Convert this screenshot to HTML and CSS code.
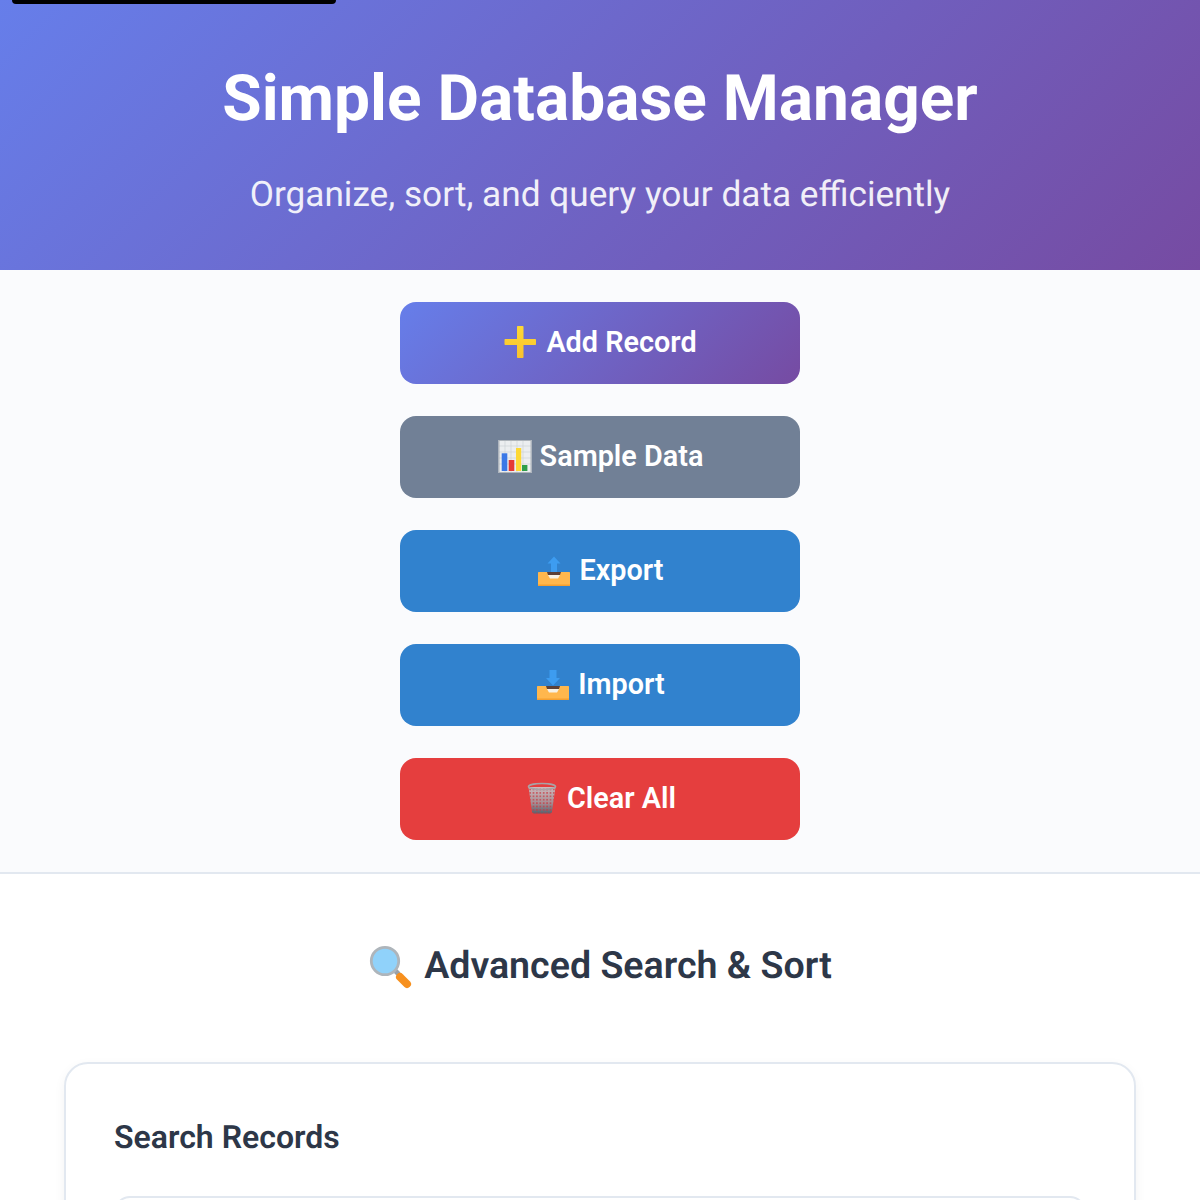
FILE: index.html
```html
<!DOCTYPE html>
<html lang="en">
<head>
  <meta charset="UTF-8" />
  <title>Simple Database Manager</title>
  <link rel="stylesheet" href="styles.css">
</head>
<body>
  <div class="notch"></div>
  <header class="header">
    <h1>Simple Database Manager</h1>
    <p>Organize, sort, and query your data efficiently</p>
  </header>

  <div class="controls">
    <button class="btn btn-primary">
      <svg class="icon" viewBox="0 0 34 34">
        <defs>
          <linearGradient id="plusFill" x1="0" y1="0" x2="0" y2="1">
            <stop offset="0" stop-color="#fdd835"/>
            <stop offset="1" stop-color="#f9c22e"/>
          </linearGradient>
        </defs>
        <path fill="url(#plusFill)" d="M14 1h4.500c.6 0 1 .4 1 1v12h11.500c.6 0 1 .4 1 1v4c0 .6-.4 1-1 1H19.500V32c0 .6-.4 1-1 1H14c-.6 0-1-.4-1-1V20H1.500c-.6 0-1-.4-1-1v-4c0-.6.4-1 1-1H13V2c0-.6.4-1 1-1z"/>
      </svg>
      <span>Add Record</span>
    </button>
    <button class="btn btn-secondary">
      <svg class="icon" viewBox="0 0 34 34">
        <rect x=".5" y="1" width="33" height="33" fill="#eceef0"/>
        <path fill="none" stroke="#cfd3d7" stroke-width=".7" d="M1 7h32M1 13h32M1 19h32M1 25h32M7 1v32M13 1v32M19 1v32M25 1v32"/>
        <rect x="1" y="1.500" width="32" height="32" fill="none" stroke="#aeb4ba" stroke-width="1"/>
        <rect x="3.700" y="14.300" width="5.600" height="17.700" fill="#3b78e7"/>
        <rect x="10.700" y="21" width="5.600" height="11" fill="#e53935"/>
        <rect x="18" y="9" width="5.200" height="23" fill="#fdd835"/>
        <rect x="24" y="26" width="5.400" height="6" fill="#2e9e4a"/>
      </svg>
      <span>Sample Data</span>
    </button>
    <button class="btn btn-info">
      <svg class="icon" viewBox="0 0 34 34">
        <defs>
          <g id="trayShape">
            <path fill="#ffb74d" d="M1 20c0-.6.4-1 1-1h30c.6 0 1 .4 1 1v12c0 .6-.4 1-1 1H2c-.6 0-1-.4-1-1z"/>
            <path fill="#f59f2f" d="M1 31.500h32v.5c0 .6-.4 1-1 1H2c-.6 0-1-.4-1-1z"/>
            <path fill="#5d4037" d="M10 19h14l-1 3H11z"/>
            <path fill="#f7f2e6" d="M11 22h12l-2 3.500h-8z"/>
          </g>
        </defs>
        <use href="#trayShape"/>
        <path fill="#3d9cf0" d="M17 3.500l6.500 7H20V19h-6v-8.500h-3.500z"/>
      </svg>
      <span>Export</span>
    </button>
    <button class="btn btn-info">
      <svg class="icon" viewBox="0 0 34 34">
        <use href="#trayShape"/>
        <path fill="#3d9cf0" d="M17 18.500l-7-7.500h3.500V3h7v8H24z"/>
      </svg>
      <span>Import</span>
    </button>
    <button class="btn btn-danger">
      <svg class="icon" viewBox="0 0 34 34">
        <defs>
          <linearGradient id="binFill" x1="0" y1="0" x2="0" y2="1">
            <stop offset="0" stop-color="#cdbcbf"/>
            <stop offset=".6" stop-color="#a88d93"/>
            <stop offset="1" stop-color="#56626e"/>
          </linearGradient>
          <pattern id="binMesh" width="3.400" height="3.400" patternUnits="userSpaceOnUse">
            <circle cx="1.700" cy="1.700" r=".95" fill="#c9343f" fill-opacity=".8"/>
          </pattern>
        </defs>
        <path fill="url(#binFill)" d="M3.500 6h27L27 30.500c-.1 1-1 2-2 2H9c-1 0-1.900-1-2-2z"/>
        <path fill="url(#binMesh)" d="M3.500 6h27L27 30.500c-.1 1-1 2-2 2H9c-1 0-1.900-1-2-2z"/>
        <ellipse cx="17" cy="5.500" rx="13.500" ry="3" fill="none" stroke="#a9a3a6" stroke-width="1.600"/>
      </svg>
      <span>Clear All</span>
    </button>
  </div>

  <section class="search-section">
    <h2>
      <svg class="icon-lg" viewBox="0 0 46 46">
        <path fill="#9aa1a8" d="M25 29l3.500-3.500 4 4-3.500 3.500z"/>
        <path fill="none" stroke="#f7901e" stroke-width="8" stroke-linecap="round" d="M32 34l7 7"/>
        <circle cx="17" cy="18" r="13.700" fill="#90d2fa" stroke="#aeb5bb" stroke-width="2.800"/>
      </svg>
      <span>Advanced Search &amp; Sort</span>
    </h2>
    <div class="card">
      <h3>Search Records</h3>
      <input class="search-input" type="text">
    </div>
  </section>
</body>
</html>
```
FILE: styles.css
```css
* {
  box-sizing: border-box;
}

html, body {
  height: 1200px;
  overflow: hidden;
}

body {
  margin: 0;
  background: #fff;
  font-family: Roboto, 'Noto Sans', sans-serif;
  color: #2d3748;
  text-rendering: geometricPrecision;
}

.notch {
  position: absolute;
  top: 0;
  left: 12px;
  width: 324px;
  height: 4px;
  background: #000;
  border-radius: 0 0 6px 6px;
}

.header {
  height: 270px;
  padding-top: 63px;
  background: linear-gradient(135deg, #667eea 0%, #764ba2 100%);
  color: white;
  text-align: center;
}

.header h1 {
  margin: 0 0 37px;
  font-size: 64px;
  line-height: 72px;
  font-weight: 700;
}

.header p {
  margin: 0;
  font-size: 35.2px;
  line-height: 44px;
  font-weight: 400;
  opacity: 0.9;
}

.controls {
  display: flex;
  flex-direction: column;
  align-items: center;
  gap: 32px;
  height: 604px;
  padding: 32px 0;
  background: #fafbfd;
  border-bottom: 2px solid #e2e8f0;
}

.btn {
  display: flex;
  align-items: center;
  justify-content: center;
  gap: 8px;
  width: 400px;
  height: 82px;
  padding: 0 0 2px 1px;
  border: none;
  border-radius: 16px;
  color: white;
  font-family: inherit;
  font-size: 28.8px;
  font-weight: 600;
  cursor: pointer;
}

.icon {
  width: 34px;
  height: 34px;
  flex: none;
}

.btn-primary { background: linear-gradient(135deg, #667eea 0%, #764ba2 100%); }
.btn-secondary { background: #718096; }
.btn-info { background: #3182ce; }
.btn-danger { background: #e53e3e; }

.search-section {
  padding: 64px 64px 0;
}

.search-section h2 {
  display: flex;
  align-items: center;
  justify-content: center;
  gap: 10px;
  margin: 0 0 69px;
  padding-top: 1px;
  font-size: 37.6px;
  line-height: 54px;
  font-weight: 600;
}

.icon-lg {
  width: 46px;
  height: 46px;
  flex: none;
}

.card {
  padding: 49px 48px 48px;
  background: white;
  border: 2px solid #e2e8f0;
  border-radius: 24px;
  box-shadow: 0 4px 12px rgba(0, 0, 0, 0.05);
}

.card h3 {
  margin: 0 0 35px;
  font-size: 32px;
  line-height: 48px;
  font-weight: 600;
}

.search-input {
  display: block;
  width: 100%;
  height: 80px;
  border: 2px solid #e2e8f0;
  border-radius: 16px;
  background: white;
}
```
